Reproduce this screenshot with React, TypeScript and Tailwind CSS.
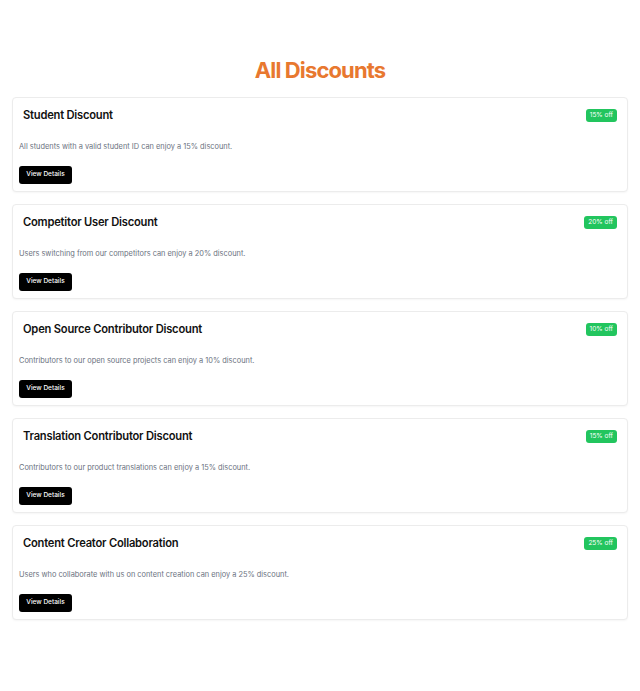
import React from "react";

const discounts = [
  { title: "Student Discount", badge: "15% off", desc: "All students with a valid student ID can enjoy a 15% discount." },
  { title: "Competitor User Discount", badge: "20% off", desc: "Users switching from our competitors can enjoy a 20% discount." },
  { title: "Open Source Contributor Discount", badge: "10% off", desc: "Contributors to our open source projects can enjoy a 10% discount." },
  { title: "Translation Contributor Discount", badge: "15% off", desc: "Contributors to our product translations can enjoy a 15% discount." },
  { title: "Content Creator Collaboration", badge: "25% off", desc: "Users who collaborate with us on content creation can enjoy a 25% discount." },
];

export default function App() {
  return (
    <div className="min-h-[691px] bg-white pt-[56px] pb-[40px]" style={{ fontFamily: "Inter, 'Noto Sans', sans-serif" }}>
      <h1 className="text-center text-[22px] leading-[28px] font-bold tracking-[-0.04em] text-[#e8782f] mb-[13px]">
        All Discounts
      </h1>
      <div className="mx-3 flex flex-col gap-[12px]">
        {discounts.map((d) => (
          <div key={d.title} className="border border-[#ececec] rounded-[4px] bg-white shadow-[0_1px_2px_rgba(0,0,0,0.04)] pt-[9px] px-[6px] pb-[7px]">
            <div className="flex items-center justify-between px-[4px] h-[16px]">
              <h2 className="text-[11.2px] leading-[16px] font-semibold tracking-[-0.02em] text-[#111]">{d.title}</h2>
              <span className="bg-[#22c55e] text-white text-[6.5px] leading-[13px] h-[13px] px-[4px] rounded-[3px]">{d.badge}</span>
            </div>
            <p className="mt-[18px] text-[7.4px] leading-[12px] text-[#6b7280]">{d.desc}</p>
            <button className="mt-[13px] h-[18px] w-[53px] rounded-[3px] bg-black text-white text-[6.5px] font-medium flex items-center justify-center">
              View Details
            </button>
          </div>
        ))}
      </div>
    </div>
  );
}
